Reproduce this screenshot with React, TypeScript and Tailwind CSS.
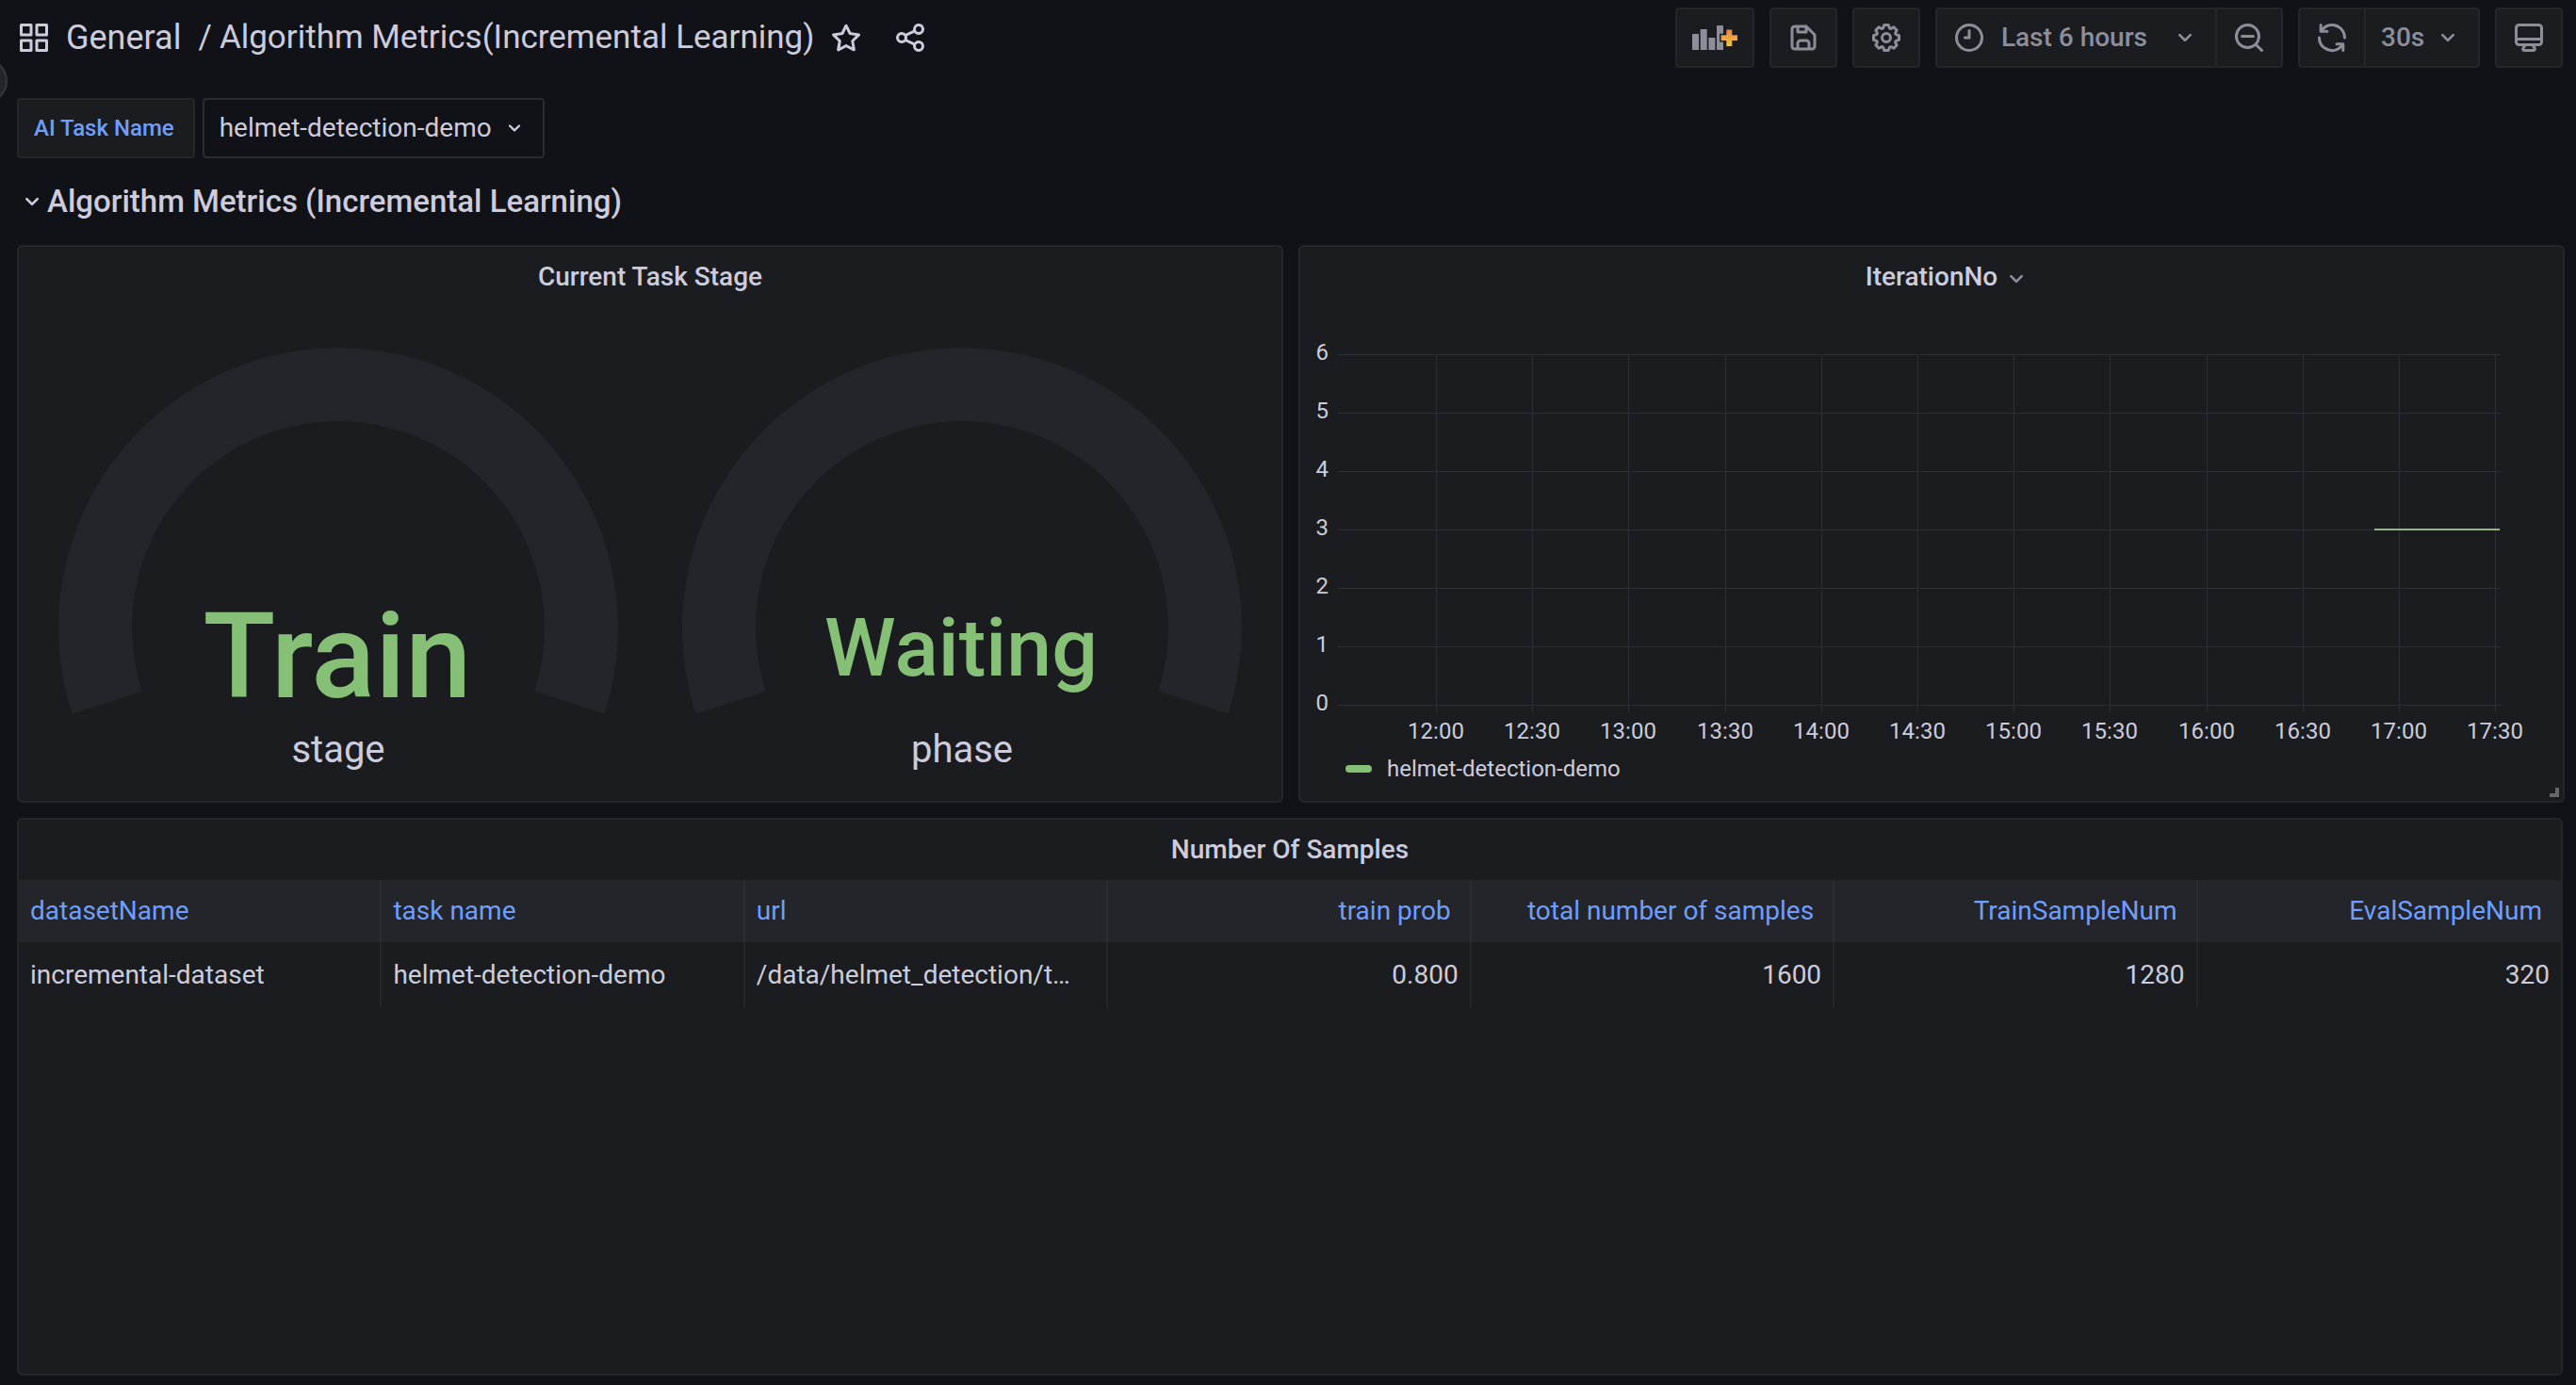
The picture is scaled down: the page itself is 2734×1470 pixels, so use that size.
import React from "react";

const ICONS = {
  apps: "M10,13H3a1,1,0,0,0-1,1v7a1,1,0,0,0,1,1h7a1,1,0,0,0,1-1V14A1,1,0,0,0,10,13ZM9,20H4V15H9ZM21,2H14a1,1,0,0,0-1,1v7a1,1,0,0,0,1,1h7a1,1,0,0,0,1-1V3A1,1,0,0,0,21,2ZM20,9H15V4h5Zm1,4H14a1,1,0,0,0-1,1v7a1,1,0,0,0,1,1h7a1,1,0,0,0,1-1V14A1,1,0,0,0,21,13Zm-1,7H15V15h5ZM10,2H3A1,1,0,0,0,2,3v7a1,1,0,0,0,1,1h7a1,1,0,0,0,1-1V3A1,1,0,0,0,10,2ZM9,9H4V4H9Z",
  star: "M22,9.67A1,1,0,0,0,21.14,9l-5.69-.83L12.9,3a1,1,0,0,0-1.8,0L8.55,8.16,2.86,9a1,1,0,0,0-.81.68,1,1,0,0,0,.25,1l4.13,4-1,5.68A1,1,0,0,0,6.9,21.44L12,18.77l5.1,2.67a.93.93,0,0,0,.46.12,1,1,0,0,0,.59-.19,1,1,0,0,0,.4-1l-1-5.68,4.13-4A1,1,0,0,0,22,9.67Zm-6.15,4a1,1,0,0,0-.29.88l.72,4.2-3.76-2a1.06,1.06,0,0,0-.94,0l-3.76,2,.72-4.2a1,1,0,0,0-.29-.88l-3-3,4.21-.61a1,1,0,0,0,.76-.55L12,5.7l1.88,3.82a1,1,0,0,0,.76.55l4.21.61Z",
  share: "M18,14a4,4,0,0,0-3.08,1.48l-5.1-2.35a3.64,3.64,0,0,0,0-2.26l5.1-2.35A4,4,0,1,0,14,6a4.17,4.17,0,0,0,.07.71L8.79,9.14a4,4,0,1,0,0,5.72l5.28,2.43A4.17,4.17,0,0,0,14,18a4,4,0,1,0,4-4ZM18,4a2,2,0,1,1-2,2A2,2,0,0,1,18,4ZM6,14a2,2,0,1,1,2-2A2,2,0,0,1,6,14Zm12,6a2,2,0,1,1,2-2A2,2,0,0,1,18,20Z",
  save: "M20.71,9.29l-6-6a1,1,0,0,0-.32-.21A1.09,1.09,0,0,0,14,3H6A3,3,0,0,0,3,6V18a3,3,0,0,0,3,3H18a3,3,0,0,0,3-3V10A1,1,0,0,0,20.71,9.29ZM9,5h4V7H9Zm6,14H9V16a1,1,0,0,1,1-1h4a1,1,0,0,1,1,1Zm4-1a1,1,0,0,1-1,1H17V16a3,3,0,0,0-3-3H10a3,3,0,0,0-3,3v3H6a1,1,0,0,1-1-1V6A1,1,0,0,1,6,5H7V8A1,1,0,0,0,8,9h6a1,1,0,0,0,1-1V6.41l4,4Z",
  cog: "M21.32,9.55l-1.89-.63.89-1.78A1,1,0,0,0,20.13,6L18,3.87a1,1,0,0,0-1.15-.19l-1.78.89-.63-1.89A1,1,0,0,0,13.5,2h-3a1,1,0,0,0-.95.68L8.92,4.57,7.14,3.68A1,1,0,0,0,6,3.87L3.87,6a1,1,0,0,0-.19,1.15l.89,1.78-1.89.63A1,1,0,0,0,2,10.5v3a1,1,0,0,0,.68.95l1.89.63-.89,1.78A1,1,0,0,0,3.87,18L6,20.13a1,1,0,0,0,1.15.19l1.78-.89.63,1.89a1,1,0,0,0,.95.68h3a1,1,0,0,0,.95-.68l.63-1.89,1.78.89A1,1,0,0,0,18,20.13L20.13,18a1,1,0,0,0,.19-1.15l-.89-1.78,1.89-.63A1,1,0,0,0,22,13.5v-3A1,1,0,0,0,21.32,9.55ZM20,12.78l-1.2.4A2,2,0,0,0,17.64,16l.57,1.14-1.1,1.1L16,17.64a2,2,0,0,0-2.79,1.16l-.4,1.2H11.22l-.4-1.2A2,2,0,0,0,8,17.64l-1.14.57-1.1-1.1L6.36,16A2,2,0,0,0,5.2,13.18L4,12.78V11.22l1.2-.4A2,2,0,0,0,6.36,8L5.79,6.89l1.1-1.1L8,6.36A2,2,0,0,0,10.82,5.2l.4-1.2h1.56l.4,1.2A2,2,0,0,0,16,6.36l1.14-.57,1.1,1.1L17.64,8a2,2,0,0,0,1.16,2.79l1.2.4ZM12,8a4,4,0,1,0,4,4A4,4,0,0,0,12,8Zm0,6a2,2,0,1,1,2-2A2,2,0,0,1,12,14Z",
  clock: "M12,2A10,10,0,1,0,22,12,10,10,0,0,0,12,2Zm0,18a8,8,0,1,1,8-8A8,8,0,0,1,12,20ZM12,6a1,1,0,0,0-1,1v4H9a1,1,0,0,0,0,2h3a1,1,0,0,0,1-1V7A1,1,0,0,0,12,6Z",
  zoomOut: "M21.71,20.29,18,16.61A9,9,0,1,0,16.61,18l3.68,3.68a1,1,0,0,0,1.42,0A1,1,0,0,0,21.71,20.29ZM11,18a7,7,0,1,1,7-7A7,7,0,0,1,11,18Zm4-8H7a1,1,0,0,0,0,2h8a1,1,0,0,0,0-2Z",
  sync: "M19.91,15.51H15.38a1,1,0,0,0,0,2h2.4A8,8,0,0,1,4,12a1,1,0,0,0-2,0,10,10,0,0,0,16.88,7.23V21a1,1,0,0,0,2,0V16.5A1,1,0,0,0,19.91,15.51ZM12,2A10,10,0,0,0,5.12,4.77V3a1,1,0,0,0-2,0V7.5a1,1,0,0,0,1,1h4.5a1,1,0,0,0,0-2H6.22A8,8,0,0,1,20,12a1,1,0,0,0,2,0A10,10,0,0,0,12,2Z",
  monitor: "M19,2H5A3,3,0,0,0,2,5V15a3,3,0,0,0,3,3H7.64l-.58,1a2,2,0,0,0,0,2,2,2,0,0,0,1.75,1h6.46A2,2,0,0,0,17,21a2,2,0,0,0,0-2l-.59-1H19a3,3,0,0,0,3-3V5A3,3,0,0,0,19,2ZM8.77,20,10,18H14l1.2,2ZM20,15a1,1,0,0,1-1,1H5a1,1,0,0,1-1-1V14H20Zm0-3H4V5A1,1,0,0,1,5,4H19a1,1,0,0,1,1,1Z",
  angleDown: "M17,9.17a1,1,0,0,0-1.41,0L12,12.71,8.46,9.17a1,1,0,0,0-1.41,0,1,1,0,0,0,0,1.42l4.24,4.24a1,1,0,0,0,1.42,0L17,10.59A1,1,0,0,0,17,9.17Z",
};

function Icon({ name, className = "size-9" }: { name: keyof typeof ICONS; className?: string }) {
  return (
    <svg viewBox="0 0 24 24" fill="currentColor" aria-hidden="true" className={"shrink-0 " + className}>
      <path d={ICONS[name]} />
    </svg>
  );
}

function AddPanelIcon() {
  return (
    <svg viewBox="0 0 48 28" className="h-7 w-12 shrink-0" aria-hidden="true">
      <defs>
        <linearGradient id="plus" x1="0" y1="0" x2="0" y2="1">
          <stop offset="0" stopColor="#e8824e" />
          <stop offset="1" stopColor="#f0c53c" />
        </linearGradient>
      </defs>
      <g fill="#8e8e9b">
        <rect x="0" y="10" width="7" height="17" rx="0.5" />
        <rect x="8.7" y="5" width="7" height="22" rx="0.5" />
        <rect x="17.4" y="14" width="7" height="13" rx="0.5" />
        <rect x="26" y="1" width="7" height="26" rx="0.5" />
      </g>
      <path
        d="M36.3 5.5h6v5.8h5.7v5.8h-5.7v5.8h-6v-5.8h-5.7v-5.8h5.7z"
        fill="url(#plus)"
        stroke="#1b1c1f"
        strokeWidth="3"
        paintOrder="stroke"
      />
    </svg>
  );
}

const BOX = "flex h-16 items-center rounded border-2 border-[#25262b] bg-[#1b1c1f] text-[#8e8e9b]";

function ToolButton({ label, children }: { label: string; children: React.ReactNode }) {
  return (
    <button type="button" aria-label={label} className={BOX + " px-4"}>
      {children}
    </button>
  );
}

function Panel({
  title,
  menu,
  className = "",
  children,
}: {
  title: string;
  menu?: boolean;
  className?: string;
  children: React.ReactNode;
}) {
  return (
    <section className={"relative flex flex-col rounded-md border-2 border-[#25262b] bg-[#1b1c1f] " + className}>
      <header className="flex h-16 items-center justify-center">
        <h2 className="relative text-[28px] leading-10 font-medium">
          {title}
          {menu && (
            <button type="button" aria-label="Panel menu" className="absolute top-1.5 left-full ml-1 text-[#8e8e9b]">
              <Icon name="angleDown" className="size-8" />
            </button>
          )}
        </h2>
      </header>
      {children}
    </section>
  );
}

function Gauge({ value, label, size, baseline }: { value: string; label: string; size: number; baseline: number }) {
  return (
    <svg viewBox="0 0 646 508" className="h-auto w-full min-w-0" role="img" aria-label={label + ": " + value}>
      <path
        d="M40.5 431.8A297 297 0 1 1 605.5 431.8L531.3 407.7A219 219 0 1 0 114.7 407.7Z"
        fill="#24252a"
      />
      <text x="322" y={baseline} textAnchor="middle" fontSize={size} fontWeight="500" fill="#86c076">
        {value}
      </text>
      <text x="323" y="483" textAnchor="middle" fontSize="40" fill="#ccccdc">
        {label}
      </text>
    </svg>
  );
}

const TIMES = ["12:00", "12:30", "13:00", "13:30", "14:00", "14:30", "15:00", "15:30", "16:00", "16:30", "17:00", "17:30"];
const LEVELS = [6, 5, 4, 3, 2, 1, 0];

function IterationChart() {
  return (
    <svg viewBox="0 0 1340 464" className="h-auto w-full" role="img" aria-label="IterationNo over time">
      <g stroke="#2e2f34" strokeWidth="1">
        {LEVELS.map((n, i) => (
          <line key={n} x1="40" x2="1274" y1={50.5 + i * 62} y2={50.5 + i * 62} />
        ))}
        {TIMES.map((t, i) => {
          const x = Math.round(144 + i * 102.2) + 0.5;
          return <line key={t} x1={x} x2={x} y1="50" y2="430" />;
        })}
      </g>
      <g fill="#ccccdc" fontSize="24">
        {LEVELS.map((n, i) => (
          <text key={n} x="30" y={56 + i * 62} textAnchor="end">
            {n}
          </text>
        ))}
        {TIMES.map((t, i) => (
          <text key={t} x={Math.round(144 + i * 102.2)} y="458" textAnchor="middle">
            {t}
          </text>
        ))}
      </g>
      <line x1="1140" x2="1273" y1="236" y2="236" stroke="#94b585" strokeWidth="2" />
    </svg>
  );
}

const COLUMNS = [
  { name: "datasetName", value: "incremental-dataset" },
  { name: "task name", value: "helmet-detection-demo" },
  { name: "url", value: "/data/helmet_detection/t…" },
  { name: "train prob", value: "0.800", numeric: true },
  { name: "total number of samples", value: "1600", numeric: true },
  { name: "TrainSampleNum", value: "1280", numeric: true },
  { name: "EvalSampleNum", value: "320", numeric: true },
];

export default function App() {
  return (
    <div className="relative flex min-h-screen flex-col overflow-hidden bg-[#111217] pr-3 pb-2.5 pl-[18px] font-['Roboto',sans-serif] text-[28px] leading-10 text-[#ccccdc]">
      <button
        type="button"
        aria-label="Open menu"
        className="absolute top-[62px] -left-10 size-12 rounded-full border-2 border-[#36373c] bg-[#24252a]"
      />

      <header className="flex items-center justify-between pt-2 pr-0.5">
        <div className="flex items-center text-[35px]">
          <Icon name="apps" />
          <h1 className="flex items-center font-normal">
            <a href="#general" className="ml-4 text-[36px]">General</a>
            <span className="mx-2 pl-2.5">/</span>
            <a href="#dashboard">Algorithm Metrics(Incremental Learning)</a>
          </h1>
          <button type="button" aria-label="Mark as favorite" className="ml-4">
            <Icon name="star" />
          </button>
          <button type="button" aria-label="Share dashboard" className="ml-8">
            <Icon name="share" />
          </button>
        </div>

        <div className="flex items-center gap-4 font-medium">
          <ToolButton label="Add panel"><AddPanelIcon /></ToolButton>
          <ToolButton label="Save dashboard"><Icon name="save" /></ToolButton>
          <ToolButton label="Dashboard settings"><Icon name="cog" /></ToolButton>
          <div className={BOX}>
            <button type="button" aria-haspopup="dialog" className="flex h-full items-center gap-4 px-4">
              <Icon name="clock" />
              <span className="mr-2">Last 6 hours</span>
              <Icon name="angleDown" className="size-8" />
            </button>
            <button type="button" aria-label="Zoom out time range" className="flex h-full items-center border-l-2 border-[#25262b] px-4">
              <Icon name="zoomOut" />
            </button>
          </div>
          <div className={BOX}>
            <button type="button" aria-label="Refresh dashboard" className="flex h-full items-center px-4">
              <Icon name="sync" />
            </button>
            <div className="relative flex h-full items-center border-l-2 border-[#25262b]">
              <select aria-label="Refresh interval" className="h-full appearance-none bg-transparent pr-14 pl-4">
                <option>30s</option>
              </select>
              <Icon name="angleDown" className="pointer-events-none absolute right-4 size-8" />
            </div>
          </div>
          <ToolButton label="Cycle view mode"><Icon name="monitor" /></ToolButton>
        </div>
      </header>

      <div className="mt-8 flex items-center gap-2">
        <label
          htmlFor="task"
          className="flex h-16 items-center rounded border-2 border-[#25262b] bg-[#1b1c1f] pr-5 pl-4 text-2xl font-medium text-[#6e9fff]"
        >
          AI Task Name
        </label>
        <div className="relative flex h-16 items-center rounded border-2 border-[#2c2d32]">
          <select id="task" className="h-full appearance-none bg-transparent pr-[54px] pl-4">
            <option>helmet-detection-demo</option>
          </select>
          <Icon name="angleDown" className="pointer-events-none absolute right-4 size-7" />
        </div>
      </div>

      <button type="button" className="my-6 flex h-11 items-center self-start text-[33px] font-medium">
        <Icon name="angleDown" className="size-8" />
        Algorithm Metrics (Incremental Learning)
      </button>

      <main className="flex grow flex-col gap-4">
        <div className="grid grid-cols-2 gap-4">
          <Panel title="Current Task Stage">
            <div className="grid grid-cols-2 gap-4 px-4 pb-4">
              <Gauge value="Train" label="stage" size={126} baseline={414} />
              <Gauge value="Waiting" label="phase" size={86} baseline={391} />
            </div>
          </Panel>
          <Panel title="IterationNo" menu>
            <IterationChart />
            <div className="flex items-center gap-4 pt-1.5 pl-12 text-2xl leading-10">
              <span className="h-2 w-7 rounded-sm bg-[#86c076]" />
              helmet-detection-demo
            </div>
            <div className="absolute right-1 bottom-1 size-2.5 border-r-4 border-b-4 border-[#66676b]" />
          </Panel>
        </div>

        <Panel title="Number Of Samples" className="mr-0.5 grow">
          <table className="w-full table-fixed border-separate border-spacing-0">
            <thead>
              <tr className="h-[66px] bg-[#24252a] text-[#6e9fff]">
                {COLUMNS.map((c) => (
                  <th
                    key={c.name}
                    scope="col"
                    className={
                      "border-r-2 border-[#2c2d32] pl-3 font-normal last:border-r-0 " +
                      (c.numeric ? "pr-5 text-right" : "pr-3 text-left")
                    }
                  >
                    {c.name}
                  </th>
                ))}
              </tr>
            </thead>
            <tbody>
              <tr className="h-[70px]">
                {COLUMNS.map((c) => (
                  <td
                    key={c.name}
                    className={
                      "truncate border-r-2 border-[#25262b] px-3 last:border-r-0 " +
                      (c.numeric ? "text-right" : "text-left")
                    }
                  >
                    {c.value}
                  </td>
                ))}
              </tr>
            </tbody>
          </table>
        </Panel>
      </main>
    </div>
  );
}
